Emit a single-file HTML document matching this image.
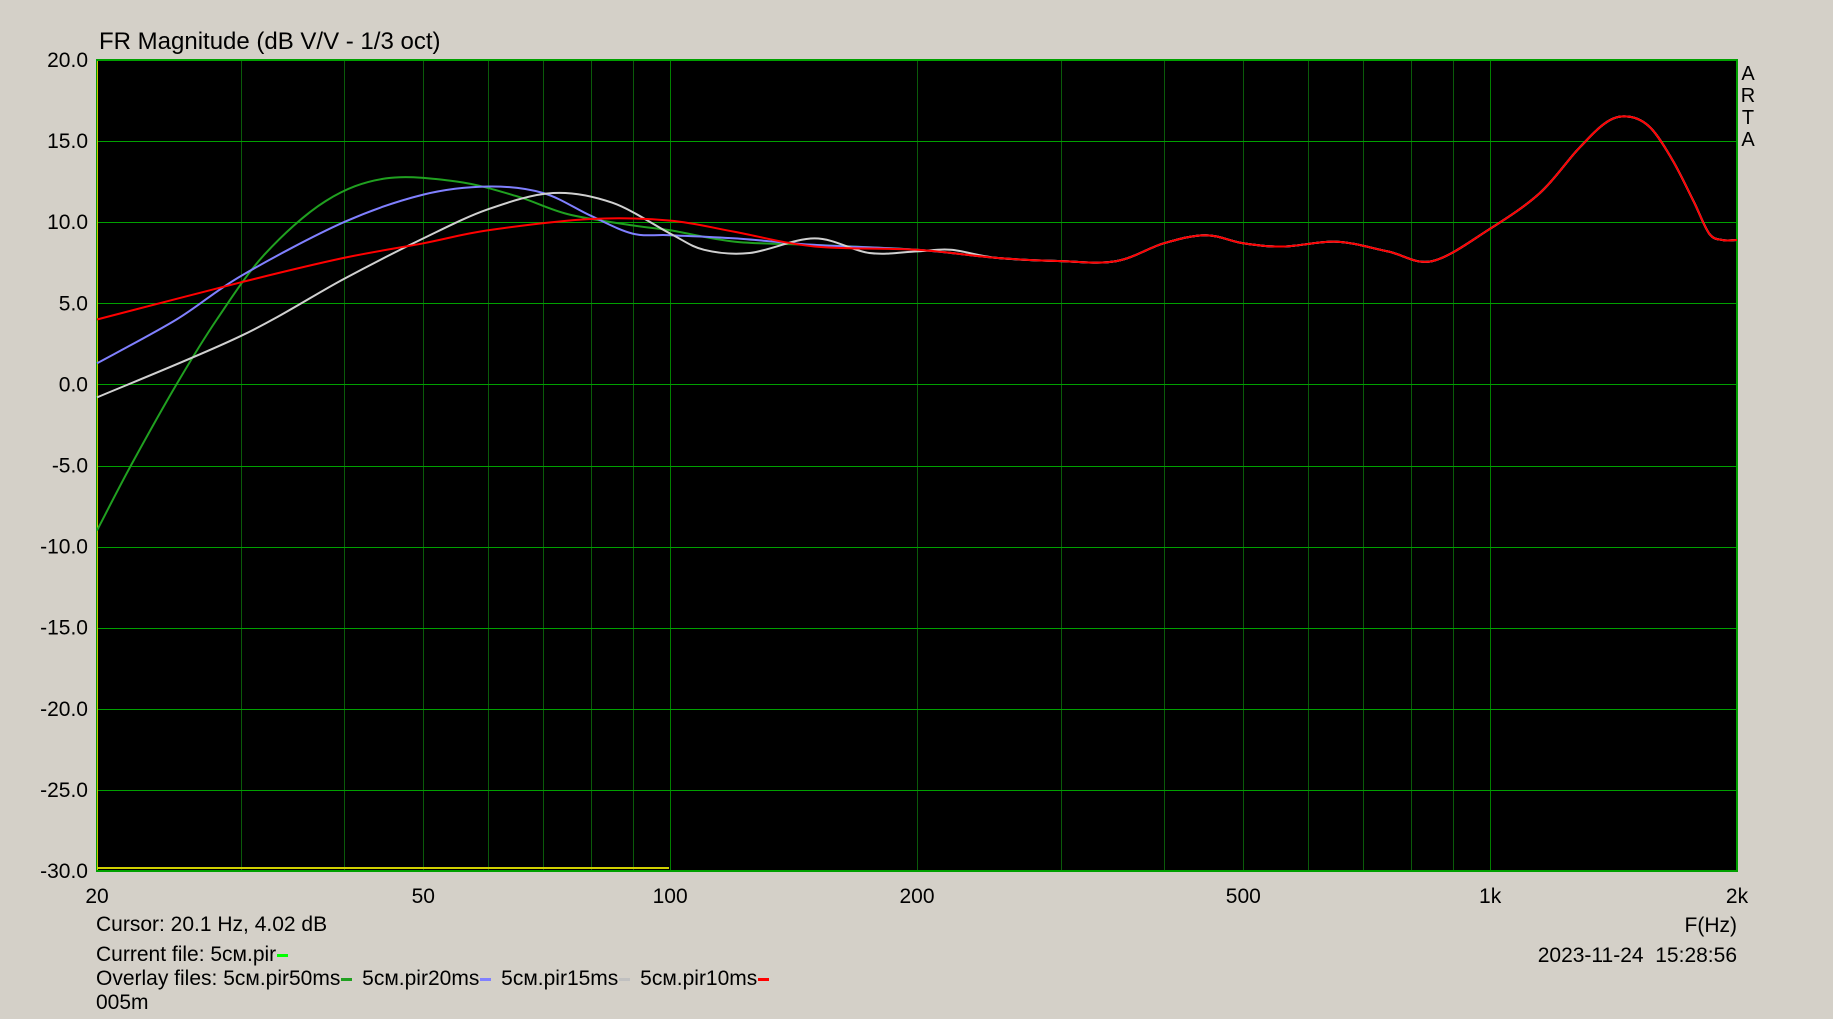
<!DOCTYPE html>
<html><head><meta charset="utf-8"><style>
html,body{margin:0;padding:0;background:#d4d0c8;width:1833px;height:1019px;overflow:hidden;position:relative}
svg{display:block;position:absolute;left:0;top:0}
text{font-family:"Liberation Sans",sans-serif;fill:#000}
.t{position:absolute;font-family:"Liberation Sans",sans-serif;font-size:21px;color:#000;white-space:pre;line-height:24px}
.sw{display:inline-block;width:11px;height:3px;vertical-align:middle;margin:0 4px 0 1px}
</style></head><body>
<svg id="s" width="1833" height="1019" xmlns="http://www.w3.org/2000/svg">
<rect width="1833" height="1019" fill="#d4d0c8"/>
<rect x="97" y="60" width="1640" height="811" fill="#000"/>
<g id="grid" stroke="#0a5a0a" stroke-width="1"></g>
<rect x="97" y="60" width="1640" height="811" fill="none" stroke="#00a000" stroke-width="2"/>
<line x1="97.5" y1="61" x2="97.5" y2="870" stroke="#d0c000" stroke-width="1"/>
<line x1="97" y1="868" x2="669" y2="868" stroke="#d0d000" stroke-width="2"/>
<g id="curves" fill="none" stroke-width="2" stroke-linejoin="round"></g>
<text x="99" y="49" font-size="24">FR Magnitude (dB V/V - 1/3 oct)</text>
<g id="ylab" font-size="21" text-anchor="end"></g>
<g id="xlab" font-size="21" text-anchor="middle"></g>
<text x="1748" y="80" font-size="20" text-anchor="middle">A</text>
<text x="1748" y="102" font-size="20" text-anchor="middle">R</text>
<text x="1748" y="124" font-size="20" text-anchor="middle">T</text>
<text x="1748" y="146" font-size="20" text-anchor="middle">A</text>
<text x="1737" y="932" font-size="21" text-anchor="end">F(Hz)</text>
<text x="1737" y="962" font-size="21" text-anchor="end">2023-11-24&#160;&#160;15:28:56</text>
</svg>
<div class="t" style="left:96px;top:913px">Cursor: 20.1 Hz, 4.02 dB</div>
<div class="t" style="left:96px;top:943px">Current file: 5см.pir<span class="sw" style="background:#00ff00"></span></div>
<div class="t" style="left:96px;top:967px">Overlay files: 5см.pir50ms<span class="sw" style="background:#20a020"></span> 5см.pir20ms<span class="sw" style="background:#8080ff"></span> 5см.pir15ms<span class="sw" style="background:#c0c0c0"></span> 5см.pir10ms<span class="sw" style="background:#ff0000"></span></div>
<div class="t" style="left:96px;top:991px">005m</div>
<script>
var NS="http://www.w3.org/2000/svg";
function X(f){return 97+820*Math.log10(f/20);}
function Y(d){return 60+(20-d)*16.22;}
function el(t,a,p,txt){var e=document.createElementNS(NS,t);for(var k in a)e.setAttribute(k,a[k]);if(txt!=null)e.textContent=txt;p.appendChild(e);return e;}
var g=document.getElementById('grid');
var fs=[30,40,50,60,70,80,90,100,200,300,400,500,600,700,800,900,1000];
fs.forEach(function(f){var x=Math.round(X(f))+0.5;el('line',{x1:x,y1:60,x2:x,y2:871,stroke:(f==100||f==1000)?'#008000':'#0a5a0a'},g);});
for(var d=15;d>-30;d-=5){var y=Math.round(Y(d))+0.5;el('line',{x1:97,y1:y,x2:1737,y2:y,stroke:'#00a000'},g);}
var yl=document.getElementById('ylab');
for(var d=20;d>=-30;d-=5){el('text',{x:88,y:Y(d)+7},yl,d.toFixed(1));}
var xl=document.getElementById('xlab');
[[20,'20'],[50,'50'],[100,'100'],[200,'200'],[500,'500'],[1000,'1k'],[2000,'2k']].forEach(function(a){el('text',{x:X(a[0]),y:903},xl,a[1]);});
var tail=[[200,8.3],[250,7.8],[300,7.6],[350,7.6],[400,8.7],[450,9.2],[500,8.7],[560,8.5],[650,8.8],[750,8.2],[850,7.6],[1000,9.6],[1150,11.8],[1280,14.5],[1390,16.2],[1480,16.5],[1570,15.8],[1670,13.8],[1770,11.3],[1850,9.3],[1920,8.9],[2000,8.9]];
var C={
 green:[[20,-9],[22,-5],[25,0],[28,4],[32,8],[38,11.3],[45,12.7],[55,12.5],[65,11.6],[75,10.5],[90,9.8],[100,9.5],[120,8.8],[150,8.6]].concat(tail),
 blue:[[20,1.3],[25,4],[30,6.7],[40,10],[50,11.7],[60,12.2],[70,11.8],[80,10.4],[90,9.3],[100,9.2],[120,9.0],[150,8.6]].concat(tail),
 white:[[20,-0.8],[30,3],[40,6.5],[50,9],[60,10.8],[72,11.8],[85,11.2],[100,9.3],[110,8.3],[125,8.1],[150,9.0],[175,8.1],[200,8.2],[220,8.3]].concat(tail.slice(1)),
 red:[[20,4.0],[30,6.3],[40,7.8],[50,8.7],[60,9.5],[80,10.2],[100,10.1],[120,9.4],[150,8.5]].concat(tail)
};
var col={green:'#20a020',blue:'#8080ff',white:'#d0d0d0',red:'#ff0000'};
var cg=document.getElementById('curves');
['green','blue','white','red'].forEach(function(k){
 var p=C[k].map(function(a){return [X(a[0]),Y(a[1])];});
 var s='M'+p[0][0].toFixed(1)+','+p[0][1].toFixed(1);
 for(var i=0;i<p.length-1;i++){
  var p0=p[Math.max(i-1,0)],p1=p[i],p2=p[i+1],p3=p[Math.min(i+2,p.length-1)];
  var c1=[p1[0]+(p2[0]-p0[0])/6,p1[1]+(p2[1]-p0[1])/6];
  var c2=[p2[0]-(p3[0]-p1[0])/6,p2[1]-(p3[1]-p1[1])/6];
  s+=' C'+c1[0].toFixed(1)+','+c1[1].toFixed(1)+' '+c2[0].toFixed(1)+','+c2[1].toFixed(1)+' '+p2[0].toFixed(1)+','+p2[1].toFixed(1);
 }
 el('path',{d:s,stroke:col[k]},cg);
});
</script>
</body></html>
